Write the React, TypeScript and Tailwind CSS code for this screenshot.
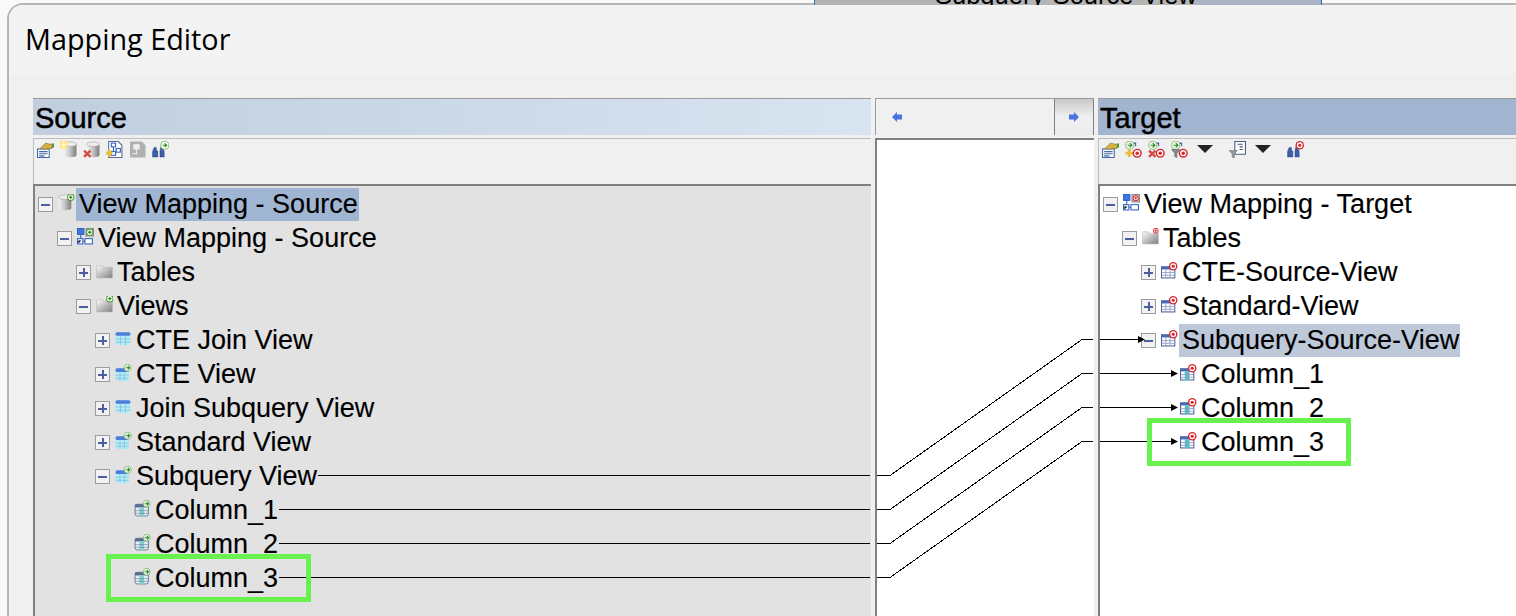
import React from 'react';

const Gradients = () => (
  <svg className="absolute h-0 w-0">
    <defs>
      <linearGradient id="cyl" x1="0" x2="1" y1="0" y2="0">
        <stop offset="0" stopColor="#f4f4f4" />
        <stop offset="0.5" stopColor="#c4c4c4" />
        <stop offset="1" stopColor="#7c7c7c" />
      </linearGradient>
      <linearGradient id="fold" x1="0" x2="1" y1="0" y2="1">
        <stop offset="0" stopColor="#fafafa" />
        <stop offset="1" stopColor="#808080" />
      </linearGradient>
    </defs>
  </svg>
);

const Ico = ({ children }: { children: React.ReactNode }) => (
  <svg viewBox="0 0 16 16" className="h-[17px] w-[17px] shrink-0">
    {children}
  </svg>
);

const Cylinder = ({ x = 2 }: { x?: number }) => (
  <g>
    <path d={`M${x} 3v10.500c0 2.400 12 2.400 12 0V3z`} fill="url(#cyl)" />
    <ellipse cx={x + 6} cy="3" rx="6" ry="2.200" fill="#ececec" stroke="#9a9a9a" strokeWidth="0.5" />
  </g>
);

const GreenPlus = ({ cx = 12, cy = 3 }: { cx?: number; cy?: number }) => (
  <g>
    <circle cx={cx} cy={cy} r="3" fill="#ffffff" stroke="#4f9a3a" />
    <path d={`M${cx - 1.6} ${cy}h3.2M${cx} ${cy - 1.6}v3.2`} stroke="#2f8a2a" strokeWidth="1.2" />
  </g>
);

const GreenArrow = ({ cx = 12, cy = 3.5, r = 3.5 }: { cx?: number; cy?: number; r?: number }) => (
  <g>
    <circle cx={cx} cy={cy} r={r} fill="#f4fbf0" stroke="#7fb56c" strokeWidth="0.8" />
    <path d={`M${cx - 2} ${cy}h3.4M${cx} ${cy - 1.8}l1.8 1.8-1.8 1.8`} stroke="#2f8a2a" strokeWidth="1.1" fill="none" />
  </g>
);

const Target = ({ cx = 12, cy = 4, r = 4 }: { cx?: number; cy?: number; r?: number }) => (
  <g>
    <circle cx={cx} cy={cy} r={r} fill="#d8262c" />
    <circle cx={cx} cy={cy} r={r * 0.68} fill="#ffffff" />
    <circle cx={cx} cy={cy} r={r * 0.38} fill="#d8262c" />
  </g>
);

const DbIcon = () => (
  <Ico>
    <Cylinder x={0.500} />
    <GreenPlus cx={12} cy={3} />
  </Ico>
);

const MapBoxes = () => (
  <g fill="#ffffff" stroke="#2f62c4" strokeWidth="1">
    <rect x="0.500" y="0.500" width="6" height="5.500" fill="#3d78e0" />
    <rect x="7.500" y="10" width="7" height="5" />
    <rect x="0.500" y="10" width="5" height="5" />
    <path d="M3.500 6v4M5.500 12.500h2" fill="none" />
    <path d="M1.500 14l2-2h-2z" fill="#111111" stroke="#111111" strokeWidth="0.6" />
  </g>
);

const MapSourceIcon = () => (
  <Ico>
    <MapBoxes />
    <rect x="8.500" y="0.500" width="7" height="7" fill="#b5b5b5" stroke="#8a8a8a" />
    <GreenPlus cx={12} cy={4} />
  </Ico>
);

const MapTargetIcon = () => (
  <Ico>
    <MapBoxes />
    <rect x="8.500" y="0.500" width="7" height="7" fill="#c4c4c4" stroke="#8a8a8a" />
    <Target cx={12} cy={4} r={2.800} />
  </Ico>
);

const FolderIcon = ({ badge }: { badge?: 'plus' | 'target' }) => (
  <Ico>
    <path d="M0.500 3.500h5.500l1 1.500h8.500v10H0.500z" fill="url(#fold)" stroke="#b8b8b8" strokeWidth="0.5" />
    {badge === 'plus' && <GreenPlus cx={13} cy={2.500} />}
    {badge === 'target' && <Target cx={13} cy={2.500} r={2.600} />}
  </Ico>
);

const ViewTable = ({ x = 1, y = 2, w = 13, h = 12 }: { x?: number; y?: number; w?: number; h?: number }) => (
  <g>
    <rect x={x} y={y} width={w} height={h} rx="2.500" fill="#aeeef4" />
    <rect x={x} y={y} width={w} height={3.5} rx="1.500" fill="#4e7fd8" />
    <path
      d={`M${x + w / 3} ${y + 3.5}v${h - 3.5}M${x + (2 * w) / 3} ${y + 3.5}v${h - 3.5}M${x} ${y + 6.5}h${w}M${x} ${y + 9.5}h${w}`}
      stroke="#7fa8d8"
      strokeWidth="0.5"
    />
  </g>
);

const ViewPlainIcon = () => (
  <Ico>
    <ViewTable x={0.500} y={2} w={14} />
  </Ico>
);

const ViewArrowIcon = () => (
  <Ico>
    <ViewTable x={0.500} y={4} w={12.500} />
    <GreenArrow cx={12} cy={3.500} r={3.300} />
  </Ico>
);

const ColumnArrowIcon = () => (
  <Ico>
    <rect x="1" y="4" width="12.500" height="11" rx="2" fill="#e4f0f2" stroke="#5a6a90" strokeWidth="0.8" />
    <rect x="1" y="4" width="12.500" height="3" fill="#5a6a90" />
    <rect x="5" y="7" width="4.500" height="8" fill="#88cfd0" />
    <path d="M1 10h12.500M1 12.500h12.500" stroke="#5a6a90" strokeWidth="0.5" />
    <GreenArrow cx={12} cy={3.500} r={3.200} />
  </Ico>
);

const TargetTableIcon = () => (
  <Ico>
    <rect x="0.500" y="4.500" width="12.500" height="10.500" fill="#ffffff" stroke="#50609a" />
    <rect x="0.500" y="4.500" width="12.500" height="2.500" fill="#4a68b8" />
    <path d="M4.500 7v8M8.500 7v8M0.500 10h12.500M0.500 12.500h12.500" stroke="#8a98c0" strokeWidth="0.8" />
    <Target cx={11.500} cy={4} r={4} />
  </Ico>
);

const TargetColumnIcon = () => (
  <Ico>
    <rect x="0.500" y="4.500" width="12.500" height="10.500" fill="#ffffff" stroke="#50609a" />
    <rect x="0.500" y="4.500" width="12.500" height="2.500" fill="#4a68b8" />
    <rect x="4.500" y="7" width="4.500" height="8" fill="#55c0c0" />
    <path d="M0.500 10h12.500M0.500 12.500h12.500" stroke="#8a98c0" strokeWidth="0.8" />
    <Target cx={11.500} cy={4} r={4} />
  </Ico>
);

const Props = () => (
  <Ico>
    <rect x="0.500" y="7.500" width="11" height="8" fill="#ffffff" stroke="#3f68a8" />
    <path d="M2 10h8M2 12h8M2 14h5" stroke="#3f68a8" />
    <path d="M3 7l5-5 4 1 3 0-1 4-4 0-3 1z" fill="#d8b040" stroke="#7a6a30" strokeWidth="0.6" />
    <path d="M14 2.500l2-0.500v4l-2 0.500z" fill="#4f9a3a" />
  </Ico>
);

const NewDb = () => (
  <Ico>
    <Cylinder x={3.500} />
    <path d="M0 0h7v7H0z" fill="#ffe070" />
    <path d="M3.500 0v7M0 3.500h7M1 1l5 5M6 1L1 6" stroke="#fff8d0" strokeWidth="0.9" />
  </Ico>
);

const DelDb = () => (
  <Ico>
    <Cylinder x={3.500} />
    <path d="M1 9l6 6M7 9l-6 6" stroke="#d84a44" strokeWidth="2.200" />
  </Ico>
);

const AddMap = () => (
  <Ico>
    <path d="M2.500 0.500h9l3.500 3.500v11.500h-12.500z" fill="#ffffff" stroke="#5a6a90" />
    <rect x="5" y="2" width="4" height="3.500" fill="#ffffff" stroke="#2f62c4" />
    <rect x="9.500" y="7" width="4" height="3.500" fill="#ffffff" stroke="#2f62c4" />
    <rect x="5" y="10" width="4" height="3.500" fill="#ffffff" stroke="#2f62c4" />
    <path d="M7 5.500v4.500M9 8.500h1" stroke="#2f62c4" />
    <path d="M3 8v7M0 11.500h6" stroke="#e8bc34" strokeWidth="2.600" />
  </Ico>
);

const GrayDoc = () => (
  <Ico>
    <path d="M1 0.500h11l3.500 3.500v11.500h-14.500z" fill="#b0b0b0" />
    <rect x="4" y="3" width="6" height="5" fill="#f0f0f0" />
    <path d="M7 8v4M3 12h5" stroke="#f0f0f0" />
  </Ico>
);

const Binoculars = () => (
  <g fill="#3c5ea8" stroke="#223a78" strokeWidth="0.4">
    <path d="M0.500 10l1.500-4h2l0.500 3.500h1v5.500h-5z" />
    <path d="M7.500 10l0.500-4h2l1.500 4v5h-4z" />
  </g>
);

const FindSource = () => (
  <Ico>
    <Binoculars />
    <GreenArrow cx={12} cy={4} r={3.800} />
  </Ico>
);

const FindTarget = () => (
  <Ico>
    <Binoculars />
    <Target cx={12} cy={4} r={4} />
  </Ico>
);

const TopArrow = () => (
  <g>
    <circle cx="4.500" cy="4" r="3.800" fill="#f0f9e8" stroke="#7fb56c" strokeWidth="0.8" />
    <path d="M2.500 4h3.500M4.500 2l2 2-2 2" stroke="#2f8a2a" strokeWidth="1.100" fill="none" />
    <path d="M8 2h2v3" stroke="#3c5ea8" fill="none" />
  </g>
);

const AddTarget = () => (
  <Ico>
    <TopArrow />
    <path d="M4 8v7M0.500 11.500h7" stroke="#e8bc34" strokeWidth="2.600" />
    <Target cx={11.500} cy={11.500} r={4.300} />
  </Ico>
);

const DelTarget = () => (
  <Ico>
    <TopArrow />
    <path d="M1 9l6 6M7 9l-6 6" stroke="#d84a44" strokeWidth="2.200" />
    <Target cx={11.500} cy={11.500} r={4.300} />
  </Ico>
);

const FilterTarget = () => (
  <Ico>
    <TopArrow />
    <path d="M0.500 8h8l-3 3.500v4l-2-1v-3z" fill="#8a8a8a" stroke="#555555" strokeWidth="0.5" />
    <Target cx={11.500} cy={11.500} r={4.300} />
  </Ico>
);

const FilterDoc = () => (
  <Ico>
    <path d="M5.500 0.500h10v12h-10z" fill="#ffffff" stroke="#4a5a80" />
    <path d="M8 3h5M10 5.500h3M10 8h3" stroke="#4a5a80" />
    <path d="M0 9h8l-3 3v4l-2-1v-3z" fill="#9a9a9a" stroke="#666666" strokeWidth="0.5" />
  </Ico>
);

const DropTriangle = () => <div className="h-0 w-0 border-x-[8.500px] border-t-[8px] border-x-transparent border-t-[#222222]" />;

const Expander = ({ open }: { open: boolean }) => (
  <div className="relative h-[15px] w-[15px] shrink-0 border border-[#9c9c9c] bg-[#f2f2f2]">
    <div className="absolute left-[2px] top-[6px] h-[2px] w-[9px] bg-[#4a5ea0]" />
    {!open && <div className="absolute left-[6px] top-[2px] h-[9px] w-[2px] bg-[#4a5ea0]" />}
  </div>
);

type RowProps = {
  level: number;
  open?: boolean;
  icon: React.ReactNode;
  label: string;
  highlight?: string;
};

const Row = ({ level, open, icon, label, highlight = '' }: RowProps) => (
  <div className="flex h-[34px] items-center" style={{ paddingLeft: 3 + level * 19 }}>
    {open === undefined ? <div className="w-[15px] shrink-0" /> : <Expander open={open} />}
    <div className="ml-[5px] -translate-y-[2px]">{icon}</div>
    <span
      className={`ml-[1px] flex h-[33px] items-center whitespace-nowrap pl-[3px] pr-[1px] text-[27px] text-black [-webkit-text-stroke:0.15px_#000000] ${highlight}`}
    >
      {label}
    </span>
  </div>
);

const sourceRows: RowProps[] = [
  { level: 0, open: true, icon: <DbIcon />, label: 'View Mapping - Source', highlight: 'bg-[#9fb5d1]' },
  { level: 1, open: true, icon: <MapSourceIcon />, label: 'View Mapping - Source' },
  { level: 2, open: false, icon: <FolderIcon />, label: 'Tables' },
  { level: 2, open: true, icon: <FolderIcon badge="plus" />, label: 'Views' },
  { level: 3, open: false, icon: <ViewPlainIcon />, label: 'CTE Join View' },
  { level: 3, open: false, icon: <ViewArrowIcon />, label: 'CTE View' },
  { level: 3, open: false, icon: <ViewPlainIcon />, label: 'Join Subquery View' },
  { level: 3, open: false, icon: <ViewArrowIcon />, label: 'Standard View' },
  { level: 3, open: true, icon: <ViewArrowIcon />, label: 'Subquery View' },
  { level: 4, icon: <ColumnArrowIcon />, label: 'Column_1' },
  { level: 4, icon: <ColumnArrowIcon />, label: 'Column_2' },
  { level: 4, icon: <ColumnArrowIcon />, label: 'Column_3' },
];

const targetRows: RowProps[] = [
  { level: 0, open: true, icon: <MapTargetIcon />, label: 'View Mapping - Target' },
  { level: 1, open: true, icon: <FolderIcon badge="target" />, label: 'Tables' },
  { level: 2, open: false, icon: <TargetTableIcon />, label: 'CTE-Source-View' },
  { level: 2, open: false, icon: <TargetTableIcon />, label: 'Standard-View' },
  { level: 2, open: true, icon: <TargetTableIcon />, label: 'Subquery-Source-View', highlight: 'bg-[#bdc9d9]' },
  { level: 3, icon: <TargetColumnIcon />, label: 'Column_1' },
  { level: 3, icon: <TargetColumnIcon />, label: 'Column_2' },
  { level: 3, icon: <TargetColumnIcon />, label: 'Column_3' },
];

const links = [
  { x0: 318, y0: 475, y1: 339, tip: 1145 },
  { x0: 279, y0: 509, y1: 373, tip: 1178 },
  { x0: 279, y0: 543, y1: 407, tip: 1178 },
  { x0: 279, y0: 577, y1: 441, tip: 1178 },
];

// connector lines run over all three panes, with a break at each pane edge
const Connectors = () => (
  <svg className="pointer-events-none absolute left-0 top-0 h-[616px] w-[1516px]" viewBox="0 0 1516 616">
    {links.map((l) => (
      <g key={l.y0}>
        <g stroke="#000000" strokeWidth="1" fill="none" shapeRendering="crispEdges">
          <path d={`M${l.x0} ${l.y0 + 0.5}H870`} />
          <path d={`M877 ${l.y0 + 0.5}H890L1082 ${l.y1 + 0.5}H1093`} />
          <path d={`M1100 ${l.y1 + 0.5}H${l.tip - 6}`} />
        </g>
        <path d={`M${l.tip - 7} ${l.y1 - 3}L${l.tip} ${l.y1 + 0.5}L${l.tip - 7} ${l.y1 + 4}z`} fill="#000000" />
      </g>
    ))}
  </svg>
);

export default function App() {
  return (
    <div
      className="relative h-[616px] w-[1516px] overflow-hidden bg-[#f9f9f9] pt-[3px]"
      style={{ fontFamily: '"Liberation Sans", Arial, sans-serif' }}
    >
      <Gradients />
      {/* other window showing behind the dialog */}
      <div className="absolute left-[814px] top-0 z-10 h-[5px] w-[508px] overflow-hidden border-x border-[#2f72a8] bg-[#b4b4b4]">
        <div className="absolute right-0 top-0 h-full w-[124px] bg-[#a8b4c6]" />
        <span className="absolute left-[120px] top-[-20px] whitespace-nowrap text-[25.500px] leading-[30px] text-black">Subquery-Source-View</span>
      </div>

      <div className="ml-[7px] flex h-[613px] flex-col overflow-hidden rounded-tl-[16px] border-l-2 border-t-2 border-[#b6b6b6]">
        <div
          className="flex h-[69px] shrink-0 items-center bg-[#f3f3f3] pb-[2px] pl-[16px] text-[28.800px] text-black"
          style={{ fontFamily: '"Open Sans", "Noto Sans", sans-serif' }}
        >
          Mapping Editor
        </div>

        <div className="flex flex-1 gap-[4px] bg-[#f0f0f0] pl-[24px] pt-[24px]">
          {/* source pane */}
          <div className="flex w-[838px] shrink-0 flex-col">
            <div className="flex h-[37px] items-center border-t border-[#9a9a9a] bg-gradient-to-r from-[#c0cedf] to-[#d8e4f0] pl-[2px] pt-[3px] text-[29px] text-black [-webkit-text-stroke:0.5px_#000000]">
              Source
            </div>
            <div className="mt-[3px] flex h-[46px] items-start gap-[6px] border-l border-t border-[#bcbcbc] pl-[3px] pt-[2px]">
              <Props />
              <NewDb />
              <DelDb />
              <AddMap />
              <GrayDoc />
              <FindSource />
            </div>
            <div className="flex-1 border-l-2 border-t-2 border-[#808080] bg-[#e2e2e2] pt-[1px]">
              {sourceRows.map((r, i) => (
                <Row key={i} {...r} />
              ))}
            </div>
          </div>

          {/* mapping canvas */}
          <div className="flex w-[219px] shrink-0 flex-col">
            <div className="flex h-[37px] items-stretch justify-between border-l border-t border-[#9a9a9a]">
              <div className="flex w-[42px] items-center justify-center">
                <svg viewBox="0 0 10 10" className="h-[10px] w-[10px]">
                  <path d="M0 5l5-5v2.500h5v5H5V10z" fill="#4a74e0" />
                </svg>
              </div>
              <div className="flex w-[40px] items-center justify-center border-x border-[#808080] bg-gradient-to-b from-[#c8c8c8] via-[#f0f0f0] to-[#ececec]">
                <svg viewBox="0 0 10 10" className="h-[10px] w-[10px]">
                  <path d="M10 5L5 0v2.500H0v5h5V10z" fill="#4a74e0" />
                </svg>
              </div>
            </div>
            <div className="mt-[3px] flex-1 border-l-2 border-t-2 border-[#808080] bg-white" />
          </div>

          {/* target pane */}
          <div className="flex min-w-0 flex-1 flex-col">
            <div className="flex h-[37px] items-center border-t border-[#9a9a9a] bg-[#a1b5d0] pl-[2px] pt-[3px] text-[29px] text-black [-webkit-text-stroke:0.5px_#000000]">
              Target
            </div>
            <div className="mt-[3px] flex h-[46px] items-start border-l border-t border-[#bcbcbc] pl-[3px] pt-[2px]">
              <div className="flex items-center gap-[6px]">
                <Props />
                <AddTarget />
                <DelTarget />
                <FilterTarget />
              </div>
              <div className="ml-[9px] mt-[4px]">
                <DropTriangle />
              </div>
              <div className="ml-[16px]">
                <FilterDoc />
              </div>
              <div className="ml-[9px] mt-[4px]">
                <DropTriangle />
              </div>
              <div className="ml-[16px]">
                <FindTarget />
              </div>
            </div>
            <div className="flex-1 border-l-2 border-t-2 border-[#808080] bg-white pt-[1px]">
              {targetRows.map((r, i) => (
                <Row key={i} {...r} />
              ))}
            </div>
          </div>
        </div>
      </div>

      <Connectors />
      {/* green annotation boxes */}
      <div className="absolute left-[106px] top-[554px] h-[48px] w-[205px] border-[5px] border-[#69f24d]" />
      <div className="absolute left-[1147px] top-[418px] h-[48px] w-[204px] border-[5px] border-[#69f24d]" />
    </div>
  );
}
